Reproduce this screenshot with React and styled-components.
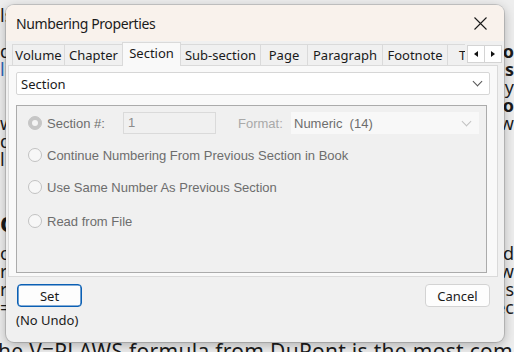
import React from 'react';
import styled, { createGlobalStyle } from 'styled-components';

const GlobalStyle = createGlobalStyle`
  html, body {
    margin: 0;
    padding: 0;
    background: #eeeeee;
  }
`;

const docRows = [
  { left: 'ls', right: '' },
  { left: '', right: '' },
  { left: 'd', right: 'co', boldRight: true },
  { left: 'li', link: true, right: 's', boldRight: true },
  { left: '', right: 'y' },
  { left: '', right: 'o', boldRight: true },
  { left: 'w', right: 'w' },
  { left: 'd', right: '' },
  { left: 'l', right: '' },
  { spacer: 39 },
  { left: 'o', right: '', heading: true },
  { spacer: 7 },
  { left: 'o', right: 'd' },
  { left: 'r', right: 'w' },
  { left: 'r', right: 's' },
  { left: '=', right: 'ec' },
  { left: '', right: '' }
];

const tabs = [
  { label: 'Volume', width: 53 },
  { label: 'Chapter', width: 59 },
  { label: 'Section', width: 59, active: true },
  { label: 'Sub-section', width: 81 },
  { label: 'Page', width: 48 },
  { label: 'Paragraph', width: 76 },
  { label: 'Footnote', width: 66 },
  { label: 'Title', width: 50 }
];

function App() {
  return (
    <Page>
      <GlobalStyle />
      <Doc>
        { docRows.map((row, i) => row.spacer
          ? <DocSpacer key={ i } $h={ row.spacer } />
          : (
            <DocRow key={ i } $heading={ row.heading }>
              <Frag $link={ row.link }>{ row.left }</Frag>
              <Frag $bold={ row.boldRight }>{ row.right }</Frag>
            </DocRow>
          )) }
        <DocLine>The V=PLAWS formula from DuPont is the most common</DocLine>
      </Doc>

      <Dialog>
        <TitleBar>
          <Title>Numbering Properties</Title>
          <CloseButton>
            <svg width="13" height="13" viewBox="0 0 13 13">
              <path d="M0.5 0.5 L12.5 12.5 M12.5 0.5 L0.5 12.5" stroke="#1a1a1a" strokeWidth="1.1" fill="none" />
            </svg>
          </CloseButton>
        </TitleBar>

        <TabRow>
          <TabViewport>
            { tabs.map(tab => (
              <Tab key={ tab.label } $active={ tab.active } style={ { width: tab.width } }>
                { tab.label }
              </Tab>
            )) }
          </TabViewport>
          <Scroller>
            <ScrollButton><Arrow $dir="left" /></ScrollButton>
            <ScrollButton><Arrow $dir="right" /></ScrollButton>
          </Scroller>
        </TabRow>

        <Panel>
          <Combo>
            <span>Section</span>
            <Chevron $color="#555" />
          </Combo>

          <GroupBox>
            <OptionRow $h={ 22 }>
              <Radio $checked />
              <OptionLabel $width={ 76 }>Section #:</OptionLabel>
              <NumberField>1</NumberField>
              <FormatLabel>Format:</FormatLabel>
              <FormatSelect>
                <span>Numeric&nbsp;&nbsp;(14)</span>
                <Chevron $color="#c2c2c2" />
              </FormatSelect>
            </OptionRow>
            <OptionRow $h={ 20 } $top={ 11 }>
              <Radio />
              <OptionLabel>Continue Numbering From Previous Section in Book</OptionLabel>
            </OptionRow>
            <OptionRow $h={ 20 } $top={ 12 }>
              <Radio />
              <OptionLabel>Use Same Number As Previous Section</OptionLabel>
            </OptionRow>
            <OptionRow $h={ 20 } $top={ 14 }>
              <Radio />
              <OptionLabel>Read from File</OptionLabel>
            </OptionRow>
          </GroupBox>
        </Panel>

        <Footer>
          <FooterLeft>
            <Button $primary>Set</Button>
            <Note>(No Undo)</Note>
          </FooterLeft>
          <Button>Cancel</Button>
        </Footer>
      </Dialog>
    </Page>
  );
}

export default App;

const uiFont = `"Noto Sans", "Open Sans", sans-serif`;
const classicFont = `"Liberation Sans", Arial, sans-serif`;

const Page = styled.div`
  position: relative;
  width: 514px;
  height: 352px;
  overflow: hidden;
  background: #eeeeee;
`;

const Doc = styled.div`
  padding-top: 6px;
  font-family: ${ uiFont };
  font-size: 18px;
  color: #1c1c1c;
`;

const DocRow = styled.div`
  display: flex;
  justify-content: space-between;
  height: ${ p => p.$heading ? 30 : 18 }px;
  line-height: ${ p => p.$heading ? 30 : 18 }px;
  font-size: ${ p => p.$heading ? 26 : 18 }px;
  font-weight: ${ p => p.$heading ? 700 : 400 };
  white-space: nowrap;
`;

const DocSpacer = styled.div`
  height: ${ p => p.$h }px;
`;

const Frag = styled.span`
  color: ${ p => p.$link ? '#2f66b8' : 'inherit' };
  font-weight: ${ p => p.$bold ? 700 : 'inherit' };
`;

const DocLine = styled.div`
  height: 22px;
  line-height: 22px;
  margin-top: 6px;
  margin-left: -14px;
  white-space: nowrap;
  font-size: 21px;
  letter-spacing: 0.3px;
`;

const Dialog = styled.div`
  position: absolute;
  left: 6px;
  top: 5px;
  width: 498px;
  height: 337px;
  box-sizing: border-box;
  border-radius: 8px;
  background: #f0f0f0;
  box-shadow: 0 0 0 1px rgba(0, 0, 0, 0.14), 0 3px 12px rgba(0, 0, 0, 0.28);
  overflow: hidden;
  display: flex;
  flex-direction: column;
  font-family: ${ uiFont };
`;

const TitleBar = styled.div`
  height: 36px;
  flex: none;
  display: flex;
  align-items: center;
  justify-content: space-between;
  padding-left: 10px;
  background: #f9f2ec;
`;

const Title = styled.span`
  font-size: 14px;
  letter-spacing: -0.4px;
  color: #1b1b1b;
`;

const CloseButton = styled.div`
  width: 44px;
  height: 36px;
  display: flex;
  align-items: center;
  justify-content: center;
  padding-right: 2px;
`;

const TabRow = styled.div`
  position: relative;
  z-index: 1;
  height: 25px;
  flex: none;
  margin-bottom: -1px;
  padding-left: 6px;
`;

const TabViewport = styled.div`
  width: 453px;
  height: 25px;
  overflow: hidden;
  display: flex;
  align-items: flex-end;
`;

const Tab = styled.div`
  flex: none;
  box-sizing: border-box;
  height: ${ p => p.$active ? 24 : 21 }px;
  margin-bottom: ${ p => p.$active ? 0 : 1 }px;
  margin-right: -1px;
  position: relative;
  z-index: ${ p => p.$active ? 1 : 0 };
  display: flex;
  align-items: center;
  justify-content: center;
  padding-bottom: ${ p => p.$active ? 3 : 0 }px;
  border: 1px solid #dadada;
  border-bottom: none;
  background: ${ p => p.$active ? '#f9f9f9' : '#f0f0f0' };
  font-size: 13px;
  color: #1a1a1a;
  white-space: nowrap;
  overflow: hidden;
`;

const Scroller = styled.div`
  position: absolute;
  right: 2px;
  top: 4px;
  display: flex;
  z-index: 2;
`;

const ScrollButton = styled.div`
  width: 18px;
  height: 18px;
  box-sizing: border-box;
  border: 1px solid #d4d4d4;
  margin-left: -1px;
  background: #ffffff;
  display: flex;
  align-items: center;
  justify-content: center;
`;

const Arrow = styled.span`
  width: 0;
  height: 0;
  border-top: 3.5px solid transparent;
  border-bottom: 3.5px solid transparent;
  ${ p => p.$dir === 'left'
    ? 'border-right: 4px solid #111;'
    : 'border-left: 4px solid #111;' }
`;

const Panel = styled.div`
  height: 212px;
  box-sizing: border-box;
  margin: 0 6px 0 2px;
  padding: 6px 7px 3px 7px;
  border: 1px solid #dadada;
  background: #f9f9f9;
  display: flex;
  flex-direction: column;
  align-items: flex-start;
`;

const Combo = styled.div`
  width: 474px;
  height: 23px;
  flex: none;
  box-sizing: border-box;
  display: flex;
  align-items: center;
  justify-content: space-between;
  padding: 0 8px 0 4px;
  border: 1px solid #d6d6d6;
  border-radius: 2px;
  background: #ffffff;
  font-size: 13px;
  color: #1a1a1a;
`;

const Chevron = styled.span`
  width: 6px;
  height: 6px;
  margin-top: -4px;
  border-right: 1px solid ${ p => p.$color };
  border-bottom: 1px solid ${ p => p.$color };
  transform: rotate(45deg);
`;

const GroupBox = styled.div`
  width: 471px;
  height: 168px;
  margin-top: 10px;
  box-sizing: border-box;
  padding: 6px 0 0 11px;
  border: 1px solid #ababab;
  background: #f0f0f0;
  font-family: ${ classicFont };
  font-size: 13px;
`;

const OptionRow = styled.div`
  display: flex;
  align-items: center;
  height: ${ p => p.$h }px;
  margin-top: ${ p => p.$top || 0 }px;
`;

const Radio = styled.span`
  flex: none;
  width: 14px;
  height: 14px;
  box-sizing: border-box;
  border-radius: 50%;
  margin-right: 5px;
  position: relative;
  border: 1px solid ${ p => p.$checked ? '#c6c6c6' : '#c2c2c2' };
  background: ${ p => p.$checked ? '#c6c6c6' : '#f7f7f7' };

  &::after {
    content: '';
    display: ${ p => p.$checked ? 'block' : 'none' };
    position: absolute;
    left: 3px;
    top: 3px;
    width: 6px;
    height: 6px;
    border-radius: 50%;
    background: #f4f4f4;
  }
`;

const OptionLabel = styled.span`
  width: ${ p => p.$width ? `${ p.$width }px` : 'auto' };
  flex: none;
  color: #6d6d6d;
  white-space: nowrap;
`;

const NumberField = styled.div`
  width: 93px;
  height: 22px;
  box-sizing: border-box;
  padding: 2px 4px;
  border: 1px solid #dadada;
  background: #f0f0f0;
  color: #8c8c8c;
  font-size: 13px;
`;

const FormatLabel = styled.span`
  width: 53px;
  margin-left: 22px;
  color: #a9a9a9;
`;

const FormatSelect = styled.div`
  width: 188px;
  height: 22px;
  box-sizing: border-box;
  display: flex;
  align-items: center;
  justify-content: space-between;
  padding: 0 9px 0 3px;
  background: #f8f8f8;
  color: #6d6d6d;
`;

const Footer = styled.div`
  display: flex;
  justify-content: space-between;
  align-items: flex-start;
  padding: 7px 14px 0 11px;
`;

const FooterLeft = styled.div`
  display: flex;
  flex-direction: column;
  align-items: flex-start;
`;

const Button = styled.div`
  width: 65px;
  height: 23px;
  box-sizing: border-box;
  display: flex;
  align-items: center;
  justify-content: center;
  border-radius: 4px;
  background: #fdfdfd;
  border: 1px solid ${ p => p.$primary ? '#0a5fb4' : '#d3d3d3' };
  box-shadow: ${ p => p.$primary ? 'inset 0 0 0 0.6px #0a5fb4' : 'none' };
  font-size: 13px;
  color: #1a1a1a;
`;

const Note = styled.span`
  margin: 4px 0 0 -1px;
  font-size: 13px;
  color: #1a1a1a;
`;
